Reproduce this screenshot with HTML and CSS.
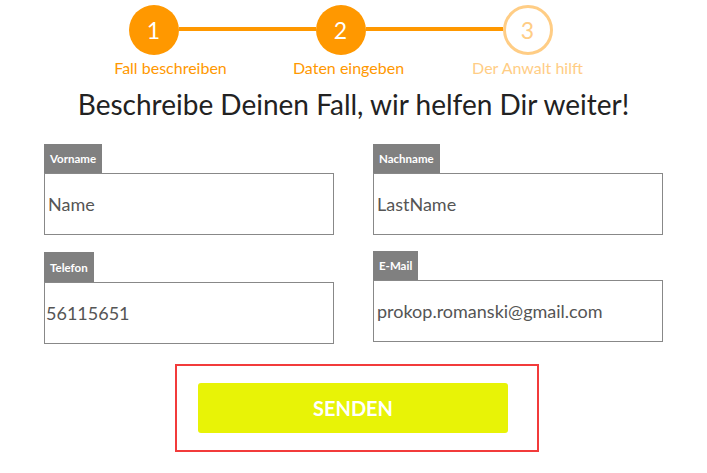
FILE: index.html
```html
<!DOCTYPE html>
<html lang="de">
<head>
<meta charset="utf-8">
<title>Fall beschreiben</title>
<link rel="stylesheet" href="styles.css">
</head>
<body>
<div class="page">
  <div class="stepper">
    <div class="step done">
      <div class="step-row"><span class="line hidden"></span><span class="circle">1</span><span class="line"></span></div>
      <div class="step-label s1">Fall beschreiben</div>
    </div>
    <div class="step done">
      <div class="step-row"><span class="line"></span><span class="circle">2</span><span class="line"></span></div>
      <div class="step-label s2">Daten eingeben</div>
    </div>
    <div class="step todo">
      <div class="step-row"><span class="line"></span><span class="circle">3</span><span class="line hidden"></span></div>
      <div class="step-label s3">Der Anwalt hilft</div>
    </div>
  </div>

  <h1 class="title">Beschreibe Deinen Fall, wir helfen Dir weiter!</h1>

  <div class="form">
    <div class="field">
      <div class="tag">Vorname</div>
      <div class="box">Name</div>
    </div>
    <div class="field">
      <div class="tag">Nachname</div>
      <div class="box">LastName</div>
    </div>
    <div class="field tel">
      <div class="tag">Telefon</div>
      <div class="box num">56115651</div>
    </div>
    <div class="field mail">
      <div class="tag">E-Mail</div>
      <div class="box">prokop.romanski@gmail.com</div>
    </div>
  </div>

  <div class="submit-wrap">
    <div class="highlight">
      <button class="send" type="button">SENDEN</button>
    </div>
  </div>
</div>
</body>
</html>
```
FILE: styles.css
```css
* { box-sizing: border-box; }
html, body { margin: 0; padding: 0; background: #fff; }
body { font-family: Lato, "Open Sans", Arial, sans-serif; color: #222; }
.page { width: 707px; height: 473px; position: relative; }

.stepper { display: flex; padding-left: 60px; padding-top: 5px; }
.step { width: 187px; display: flex; flex-direction: column; align-items: center; }
.step-row { display: flex; align-items: center; width: 100%; height: 50px; }
.line { flex: 1; height: 4px; background: #ff9800; margin-top: -2px; }
.line.hidden { background: transparent; }
.circle {
  width: 50px; height: 50px; border-radius: 50%;
  display: flex; align-items: center; justify-content: center;
  font-size: 23px; color: #fff; background: #ff9800;
}
.todo .circle { background: #fff; border: 3px solid #ffcd85; color: #ffcd85; }
.step-label { font-size: 16px; color: #ff9800; margin-top: 3px; line-height: 19px; white-space: nowrap; }
.step-label.s1 { margin-left: 34px; }
.step-label.s2 { margin-left: 16px; }
.step-label.s3 { margin-left: 0; }
.todo .step-label { color: #ffcd85; }

.title {
  margin: 10px 0 0; text-align: center; font-weight: 400;
  font-size: 28px; line-height: 34px; color: #222;
}

.form {
  display: grid; grid-template-columns: 290px 290px; column-gap: 39px;
  width: 619px; margin: 23px auto 0;
}
.field { display: flex; flex-direction: column; align-items: flex-start; }
.field.tel { margin-top: 17px; }
.field.tel .tag { height: 30px; line-height: 31px; }
.field.mail { margin-top: 16px; }
.tag {
  background: #808080; color: #fff; font-size: 11.5px; font-weight: 700;
  height: 29px; line-height: 30px; padding: 0 6px;
}
.box {
  width: 290px; height: 62px; border: 1px solid #888; background: #fff;
  display: flex; align-items: center; padding-left: 3px;
  font-size: 18px; color: #555;
}
.box.num { padding-left: 1px; }

.submit-wrap { display: flex; justify-content: flex-start; padding-left: 175px; margin-top: 20px; }
.highlight {
  width: 364px; height: 88px; border: 2px solid #f23b3b;
  display: flex; align-items: center; justify-content: flex-start;
  padding-left: 21px;
}
.send {
  width: 310px; height: 50px; border: 0; border-radius: 3px;
  background: #e8f306; color: #fff; font-family: Lato, Arial, sans-serif;
  font-weight: 700; font-size: 20px; cursor: pointer; padding: 0;
}
```
